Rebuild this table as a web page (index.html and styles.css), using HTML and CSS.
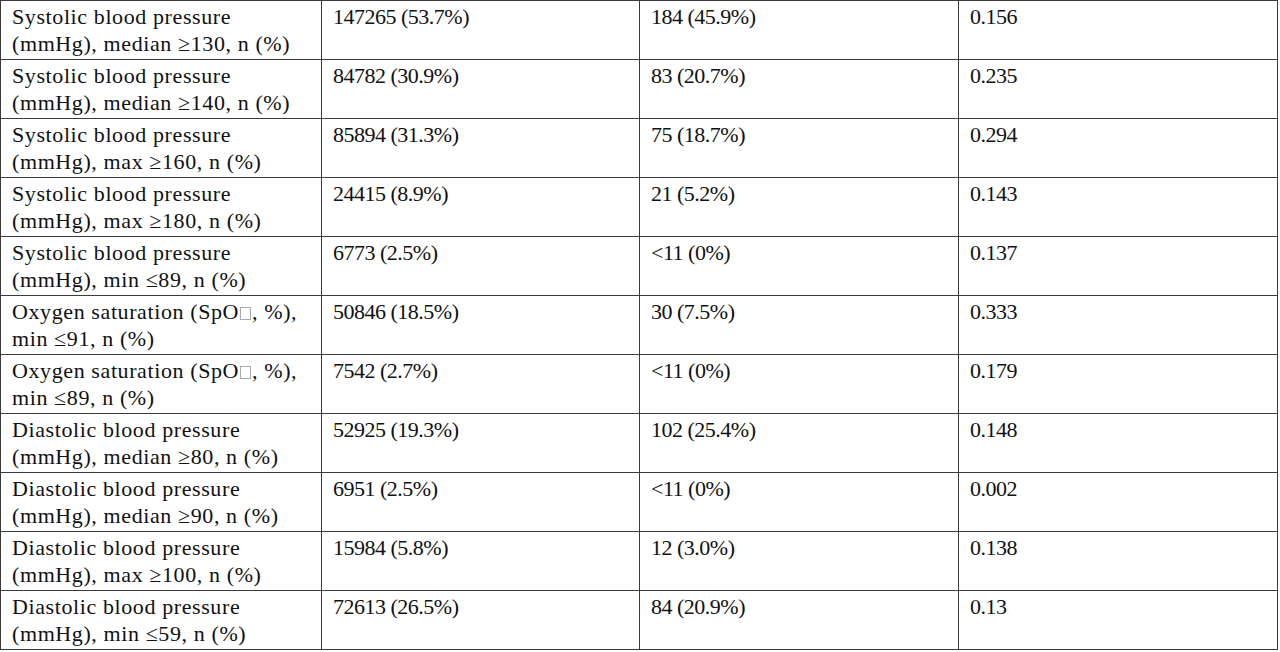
FILE: index.html
```html
<!DOCTYPE html>
<html>
<head>
<meta charset="utf-8">
<link rel="stylesheet" href="styles.css">
</head>
<body>
<table class="data">
<colgroup><col class="c1"><col class="c2"><col class="c3"><col class="c4"></colgroup>
<tbody>
<tr><td class="label">Systolic blood pressure (mmHg), median ≥130, n (%)</td><td class="num">147265 (53.7%)</td><td class="num">184 (45.9%)</td><td class="num">0.156</td></tr>
<tr><td class="label">Systolic blood pressure (mmHg), median ≥140, n (%)</td><td class="num">84782 (30.9%)</td><td class="num">83 (20.7%)</td><td class="num">0.235</td></tr>
<tr><td class="label">Systolic blood pressure (mmHg), max ≥160, n (%)</td><td class="num">85894 (31.3%)</td><td class="num">75 (18.7%)</td><td class="num">0.294</td></tr>
<tr><td class="label">Systolic blood pressure (mmHg), max ≥180, n (%)</td><td class="num">24415 (8.9%)</td><td class="num">21 (5.2%)</td><td class="num">0.143</td></tr>
<tr><td class="label">Systolic blood pressure (mmHg), min ≤89, n (%)</td><td class="num">6773 (2.5%)</td><td class="num">&lt;11 (0%)</td><td class="num">0.137</td></tr>
<tr><td class="label">Oxygen saturation (SpO<span class="tofu">₂</span>, %), min ≤91, n (%)</td><td class="num">50846 (18.5%)</td><td class="num">30 (7.5%)</td><td class="num">0.333</td></tr>
<tr><td class="label">Oxygen saturation (SpO<span class="tofu">₂</span>, %), min ≤89, n (%)</td><td class="num">7542 (2.7%)</td><td class="num">&lt;11 (0%)</td><td class="num">0.179</td></tr>
<tr><td class="label">Diastolic blood pressure (mmHg), median ≥80, n (%)</td><td class="num">52925 (19.3%)</td><td class="num">102 (25.4%)</td><td class="num">0.148</td></tr>
<tr><td class="label">Diastolic blood pressure (mmHg), median ≥90, n (%)</td><td class="num">6951 (2.5%)</td><td class="num">&lt;11 (0%)</td><td class="num">0.002</td></tr>
<tr><td class="label">Diastolic blood pressure (mmHg), max ≥100, n (%)</td><td class="num">15984 (5.8%)</td><td class="num">12 (3.0%)</td><td class="num">0.138</td></tr>
<tr><td class="label">Diastolic blood pressure (mmHg), min ≤59, n (%)</td><td class="num">72613 (26.5%)</td><td class="num">84 (20.9%)</td><td class="num">0.13</td></tr>
</tbody>
</table>
</body>
</html>
```
FILE: styles.css
```css
html, body {
  margin: 0;
  padding: 0;
  background: #fff;
}
.data {
  border-collapse: collapse;
  table-layout: fixed;
  width: 1277px;
  font-family: "Liberation Serif", "Times New Roman", serif;
  font-size: 22px;
  line-height: 27px;
  color: #111;
}
.c1 { width: 321px; }
.c2 { width: 318px; }
.c3 { width: 319px; }
.c4 { width: 319px; }
.data td {
  font-family: "Liberation Serif", "Times New Roman", serif;
  border: 1px solid #3a3a3a;
  vertical-align: top;
  padding: 2px 13px 2px 11px;
  height: 59px;
  box-sizing: border-box;
}
.data td.label {
  letter-spacing: 0.6px;
}
.data td.num {
  letter-spacing: -0.5px;
}
.tofu {
  display: inline-block;
  width: 11px;
  height: 13px;
  border: 1px solid #aaa;
  box-sizing: border-box;
  color: transparent;
  font-size: 1px;
  line-height: 1px;
  vertical-align: -1px;
  margin: 0 1px 0 1px;
  overflow: hidden;
}
```
